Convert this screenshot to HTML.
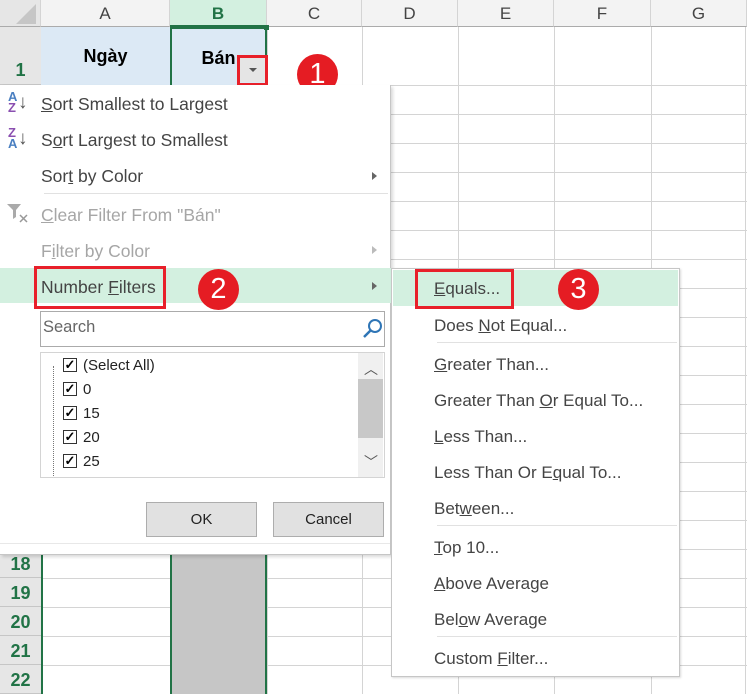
<!DOCTYPE html>
<html><head><meta charset="utf-8"><style>
*{margin:0;padding:0;box-sizing:border-box}
body{width:747px;height:694px;overflow:hidden;background:#fff;position:relative;font-family:"Liberation Sans",sans-serif}
.a{position:absolute}
.vl{position:absolute;top:0;width:1px;height:694px;background:#d4d4d4}
.hl{position:absolute;left:0;width:747px;height:1px;background:#d4d4d4}
.ch{position:absolute;top:0;height:27px;line-height:27px;text-align:center;font-size:17px;color:#444;background:#f3f3f3;border-right:1px solid #d4d4d4;border-bottom:1px solid #ababab}
.rn{position:absolute;left:0;width:41px;height:29px;background:#e6e6e6;color:#217346;font-weight:bold;font-size:18px;text-align:center;line-height:30px;border-bottom:1px solid #c6c6c6}
.mi{position:absolute;left:41px;font-size:17.5px;color:#444;white-space:nowrap}
.dis{color:#a6a6a6}
.si{position:absolute;left:434px;font-size:17px;color:#444;white-space:nowrap}
.arr{position:absolute;width:0;height:0;border-top:4px solid transparent;border-bottom:4px solid transparent;border-left:5px solid #666}
.box{position:absolute;border:3px solid #e8202a}
.circ{position:absolute;width:41px;height:41px;border-radius:50%;background:#e51c23;color:#fff;font-size:29px;text-align:center;line-height:41px}
.sep{position:absolute;height:1px;background:#e1e1e1}
.cb{position:absolute;left:63px;width:14px;height:14px;border:1px solid #333;background:#fff;font-size:13px;line-height:12px;text-align:center;font-weight:bold;color:#000}
.cl{position:absolute;left:83px;font-size:15px;color:#222}
</style></head><body>
<div class="vl" style="left:41px"></div><div class="vl" style="left:170px"></div><div class="vl" style="left:267px"></div><div class="vl" style="left:362px"></div><div class="vl" style="left:458px"></div><div class="vl" style="left:554px"></div><div class="vl" style="left:651px"></div><div class="vl" style="left:745px"></div>
<div class="hl" style="top:85px"></div>
<div class="hl" style="top:114px"></div><div class="hl" style="top:143px"></div><div class="hl" style="top:172px"></div><div class="hl" style="top:201px"></div><div class="hl" style="top:230px"></div><div class="hl" style="top:259px"></div><div class="hl" style="top:288px"></div><div class="hl" style="top:317px"></div><div class="hl" style="top:346px"></div><div class="hl" style="top:375px"></div><div class="hl" style="top:404px"></div><div class="hl" style="top:433px"></div><div class="hl" style="top:462px"></div><div class="hl" style="top:491px"></div><div class="hl" style="top:520px"></div><div class="hl" style="top:549px"></div><div class="hl" style="top:578px"></div><div class="hl" style="top:607px"></div><div class="hl" style="top:636px"></div><div class="hl" style="top:665px"></div>
<div class="ch" style="left:0;width:41px;background:#e6e6e6"></div>
<div class="a" style="left:16px;top:4px;width:0;height:0;border-left:20px solid transparent;border-bottom:20px solid #c6c6c6"></div>
<div class="ch" style="left:41px;width:129px">A</div>
<div class="ch" style="left:170px;width:97px;background:#d3f0e0;color:#217346;font-weight:bold;border-bottom:2px solid #217346">B</div>
<div class="ch" style="left:267px;width:95px">C</div>
<div class="ch" style="left:362px;width:96px">D</div>
<div class="ch" style="left:458px;width:96px">E</div>
<div class="ch" style="left:554px;width:97px">F</div>
<div class="ch" style="left:651px;width:96px">G</div>
<div class="a" style="left:0;top:27px;width:41px;height:58px;background:#e6e6e6;border-bottom:1px solid #c6c6c6"></div>
<div class="a" style="left:0;top:60px;width:41px;text-align:center;color:#217346;font-weight:bold;font-size:18px">1</div>
<div class="a" style="left:41px;top:27px;width:129px;height:58px;background:#dce9f5;text-align:center;font-weight:bold;font-size:18px;line-height:58px">Ngày</div>
<div class="a" style="left:170px;top:27px;width:97px;height:58px;background:#dce9f5;text-align:center;font-weight:bold;font-size:18px;line-height:58px;border:2px solid #217346;border-bottom:none">Bán</div>
<div class="a" style="left:264px;top:25px;width:5px;height:5px;background:#217346"></div>
<div class="a" style="left:240px;top:58px;width:26px;height:24px;background:#e5e5e5"></div>
<div class="a" style="left:249px;top:68px;border-left:4px solid transparent;border-right:4px solid transparent;border-top:4px solid #555"></div>
<div class="box" style="left:237px;top:55px;width:31px;height:31px"></div>
<div class="circ" style="left:297px;top:54px">1</div>
<div class="a" style="left:170px;top:555px;width:97px;height:139px;background:#c6c6c6;border-left:2px solid #217346;border-right:2px solid #217346"></div>
<div class="a" style="left:41px;top:555px;width:2px;height:139px;background:#217346"></div>
<div class="rn" style="top:549px">18</div><div class="rn" style="top:578px">19</div><div class="rn" style="top:607px">20</div><div class="rn" style="top:636px">21</div><div class="rn" style="top:665px">22</div>
<div class="a" style="left:0;top:85px;width:391px;height:470px;background:#fff;border-right:1px solid #c6c6c6;border-bottom:1px solid #c6c6c6;box-shadow:2px 2px 3px rgba(0,0,0,.15)"></div>
<div class="a" style="left:8px;top:91px;font-size:13px;font-weight:bold;line-height:11px;color:#4a7fc1">A<br><span style="color:#8a4fb0">Z</span></div>
<div class="a" style="left:18px;top:92px;font-size:19px;color:#555">↓</div>
<div class="a" style="left:8px;top:127px;font-size:13px;font-weight:bold;line-height:11px;color:#8a4fb0">Z<br><span style="color:#4a7fc1">A</span></div>
<div class="a" style="left:18px;top:128px;font-size:19px;color:#555">↓</div>
<div class="mi" style="top:94px"><u>S</u>ort Smallest to Largest</div>
<div class="mi" style="top:130px">S<u>o</u>rt Largest to Smallest</div>
<div class="mi" style="top:166px">Sor<u>t</u> by Color</div>
<div class="arr" style="left:372px;top:172px"></div>
<div class="sep" style="left:44px;top:193px;width:344px"></div>
<svg class="a" style="left:6px;top:202px" width="24" height="22" viewBox="0 0 24 22"><path d="M1 2h14l-5 6v7l-3 2V8z" fill="#aaa"/><path d="M14 13l7 7M21 13l-7 7" stroke="#999" stroke-width="1.5"/></svg>
<div class="mi dis" style="top:205px"><u>C</u>lear Filter From "Bán"</div>
<div class="mi dis" style="top:241px">F<u>i</u>lter by Color</div>
<div class="arr" style="left:372px;top:246px;border-left-color:#bbb"></div>
<div class="a" style="left:0;top:268px;width:391px;height:35px;background:#d3f0e0"></div>
<div class="mi" style="top:277px">Number <u>F</u>ilters</div>
<div class="arr" style="left:372px;top:282px"></div>
<div class="box" style="left:34px;top:266px;width:132px;height:43px"></div>
<div class="circ" style="left:198px;top:269px">2</div>
<div class="a" style="left:40px;top:311px;width:345px;height:36px;border:1px solid #ababab;background:#fff"></div>
<div class="a" style="left:43px;top:318px;font-size:16.5px;color:#666">Search</div>
<svg class="a" style="left:362px;top:318px" width="22" height="22" viewBox="0 0 22 22"><circle cx="13" cy="8" r="6" fill="none" stroke="#2e75b6" stroke-width="2"/><line x1="9" y1="12" x2="2" y2="19" stroke="#2e75b6" stroke-width="2.5"/></svg>
<div class="a" style="left:40px;top:352px;width:345px;height:126px;border:1px solid #d4d4d4;background:#fff"></div>
<div class="a" style="left:358px;top:353px;width:25px;height:124px;background:#f0f0f0"></div>
<div class="a" style="left:358px;top:379px;width:25px;height:59px;background:#c8c8c8"></div>
<div class="a" style="left:364px;top:359px;font-size:14px;color:#555">︿</div>
<div class="a" style="left:364px;top:452px;font-size:14px;color:#555">﹀</div>
<div class="a" style="left:53px;top:366px;width:1px;height:110px;border-left:1px dotted #777"></div>
<div class="cb" style="top:358px">✓</div><div class="cl" style="top:357px">(Select All)</div>
<div class="cb" style="top:382px">✓</div><div class="cl" style="top:381px">0</div>
<div class="cb" style="top:406px">✓</div><div class="cl" style="top:405px">15</div>
<div class="cb" style="top:430px">✓</div><div class="cl" style="top:429px">20</div>
<div class="cb" style="top:454px">✓</div><div class="cl" style="top:453px">25</div>
<div class="a" style="left:146px;top:502px;width:111px;height:35px;background:#e1e1e1;border:1px solid #adadad;text-align:center;line-height:33px;font-size:15px;color:#222">OK</div>
<div class="a" style="left:273px;top:502px;width:111px;height:35px;background:#e1e1e1;border:1px solid #adadad;text-align:center;line-height:33px;font-size:15px;color:#222">Cancel</div>
<div class="a" style="left:0;top:543px;width:390px;height:1px;background:#e8e8e8"></div>
<div class="a" style="left:391px;top:268px;width:289px;height:409px;background:#fff;border:1px solid #c6c6c6;box-shadow:1px 1px 2px rgba(0,0,0,.15)"></div>
<div class="a" style="left:393px;top:270px;width:285px;height:36px;background:#d3f0e0"></div>
<div class="si" style="top:279px"><u>E</u>quals...</div>
<div class="box" style="left:415px;top:269px;width:99px;height:40px"></div>
<div class="circ" style="left:558px;top:269px">3</div>
<div class="si" style="top:316px">Does <u>N</u>ot Equal...</div>
<div class="sep" style="left:437px;top:342px;width:240px"></div>
<div class="si" style="top:355px"><u>G</u>reater Than...</div>
<div class="si" style="top:391px">Greater Than <u>O</u>r Equal To...</div>
<div class="si" style="top:427px"><u>L</u>ess Than...</div>
<div class="si" style="top:463px">Less Than Or E<u>q</u>ual To...</div>
<div class="si" style="top:499px">Bet<u>w</u>een...</div>
<div class="sep" style="left:437px;top:525px;width:240px"></div>
<div class="si" style="top:538px"><u>T</u>op 10...</div>
<div class="si" style="top:574px"><u>A</u>bove Average</div>
<div class="si" style="top:610px">Bel<u>o</u>w Average</div>
<div class="sep" style="left:437px;top:636px;width:240px"></div>
<div class="si" style="top:649px">Custom <u>F</u>ilter...</div>
</body></html>
